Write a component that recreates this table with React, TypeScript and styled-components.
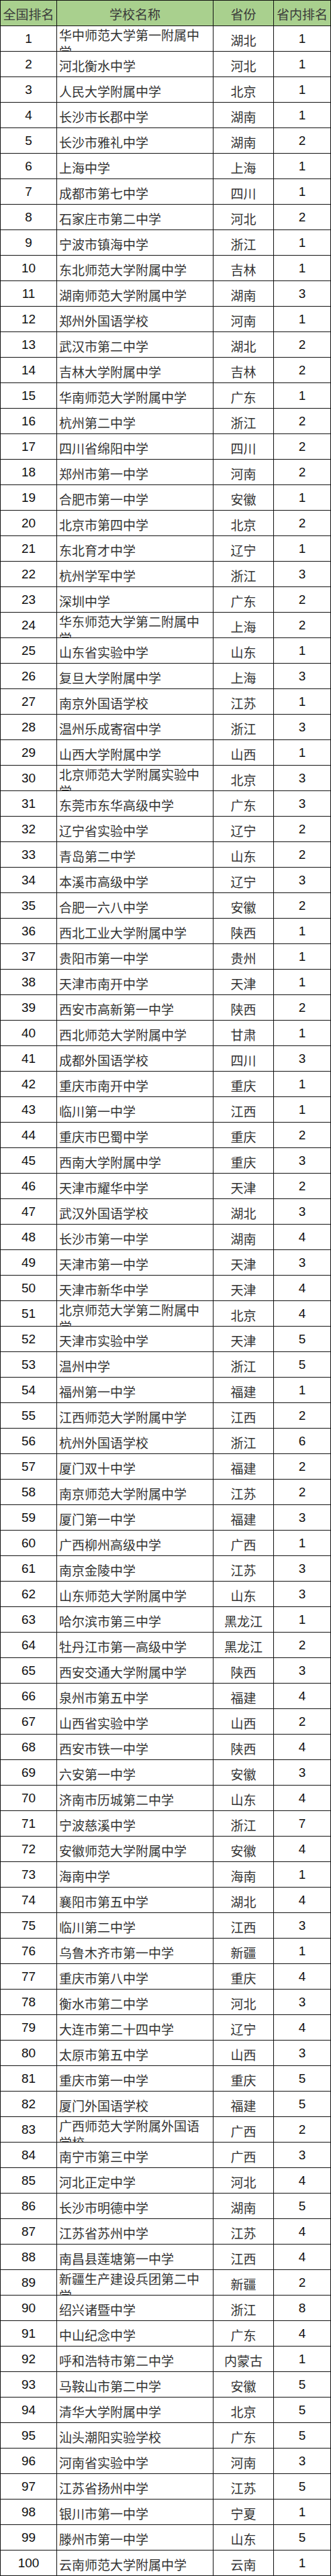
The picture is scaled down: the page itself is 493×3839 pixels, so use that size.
import React from 'react';
import styled, { createGlobalStyle } from 'styled-components';

const GlobalStyle = createGlobalStyle`
    html, body {
        margin: 0;
        padding: 0;
        background: #ffffff;
    }
`

type School = [number, string, string, number];

const schools: School[] = [
    [1, "华中师范大学第一附属中学", "湖北", 1],
    [2, "河北衡水中学", "河北", 1],
    [3, "人民大学附属中学", "北京", 1],
    [4, "长沙市长郡中学", "湖南", 1],
    [5, "长沙市雅礼中学", "湖南", 2],
    [6, "上海中学", "上海", 1],
    [7, "成都市第七中学", "四川", 1],
    [8, "石家庄市第二中学", "河北", 2],
    [9, "宁波市镇海中学", "浙江", 1],
    [10, "东北师范大学附属中学", "吉林", 1],
    [11, "湖南师范大学附属中学", "湖南", 3],
    [12, "郑州外国语学校", "河南", 1],
    [13, "武汉市第二中学", "湖北", 2],
    [14, "吉林大学附属中学", "吉林", 2],
    [15, "华南师范大学附属中学", "广东", 1],
    [16, "杭州第二中学", "浙江", 2],
    [17, "四川省绵阳中学", "四川", 2],
    [18, "郑州市第一中学", "河南", 2],
    [19, "合肥市第一中学", "安徽", 1],
    [20, "北京市第四中学", "北京", 2],
    [21, "东北育才中学", "辽宁", 1],
    [22, "杭州学军中学", "浙江", 3],
    [23, "深圳中学", "广东", 2],
    [24, "华东师范大学第二附属中学", "上海", 2],
    [25, "山东省实验中学", "山东", 1],
    [26, "复旦大学附属中学", "上海", 3],
    [27, "南京外国语学校", "江苏", 1],
    [28, "温州乐成寄宿中学", "浙江", 3],
    [29, "山西大学附属中学", "山西", 1],
    [30, "北京师范大学附属实验中学", "北京", 3],
    [31, "东莞市东华高级中学", "广东", 3],
    [32, "辽宁省实验中学", "辽宁", 2],
    [33, "青岛第二中学", "山东", 2],
    [34, "本溪市高级中学", "辽宁", 3],
    [35, "合肥一六八中学", "安徽", 2],
    [36, "西北工业大学附属中学", "陕西", 1],
    [37, "贵阳市第一中学", "贵州", 1],
    [38, "天津市南开中学", "天津", 1],
    [39, "西安市高新第一中学", "陕西", 2],
    [40, "西北师范大学附属中学", "甘肃", 1],
    [41, "成都外国语学校", "四川", 3],
    [42, "重庆市南开中学", "重庆", 1],
    [43, "临川第一中学", "江西", 1],
    [44, "重庆市巴蜀中学", "重庆", 2],
    [45, "西南大学附属中学", "重庆", 3],
    [46, "天津市耀华中学", "天津", 2],
    [47, "武汉外国语学校", "湖北", 3],
    [48, "长沙市第一中学", "湖南", 4],
    [49, "天津市第一中学", "天津", 3],
    [50, "天津市新华中学", "天津", 4],
    [51, "北京师范大学第二附属中学", "北京", 4],
    [52, "天津市实验中学", "天津", 5],
    [53, "温州中学", "浙江", 5],
    [54, "福州第一中学", "福建", 1],
    [55, "江西师范大学附属中学", "江西", 2],
    [56, "杭州外国语学校", "浙江", 6],
    [57, "厦门双十中学", "福建", 2],
    [58, "南京师范大学附属中学", "江苏", 2],
    [59, "厦门第一中学", "福建", 3],
    [60, "广西柳州高级中学", "广西", 1],
    [61, "南京金陵中学", "江苏", 3],
    [62, "山东师范大学附属中学", "山东", 3],
    [63, "哈尔滨市第三中学", "黑龙江", 1],
    [64, "牡丹江市第一高级中学", "黑龙江", 2],
    [65, "西安交通大学附属中学", "陕西", 3],
    [66, "泉州市第五中学", "福建", 4],
    [67, "山西省实验中学", "山西", 2],
    [68, "西安市铁一中学", "陕西", 4],
    [69, "六安第一中学", "安徽", 3],
    [70, "济南市历城第二中学", "山东", 4],
    [71, "宁波慈溪中学", "浙江", 7],
    [72, "安徽师范大学附属中学", "安徽", 4],
    [73, "海南中学", "海南", 1],
    [74, "襄阳市第五中学", "湖北", 4],
    [75, "临川第二中学", "江西", 3],
    [76, "乌鲁木齐市第一中学", "新疆", 1],
    [77, "重庆市第八中学", "重庆", 4],
    [78, "衡水市第二中学", "河北", 3],
    [79, "大连市第二十四中学", "辽宁", 4],
    [80, "太原市第五中学", "山西", 3],
    [81, "重庆市第一中学", "重庆", 5],
    [82, "厦门外国语学校", "福建", 5],
    [83, "广西师范大学附属外国语学校", "广西", 2],
    [84, "南宁市第三中学", "广西", 3],
    [85, "河北正定中学", "河北", 4],
    [86, "长沙市明德中学", "湖南", 5],
    [87, "江苏省苏州中学", "江苏", 4],
    [88, "南昌县莲塘第一中学", "江西", 4],
    [89, "新疆生产建设兵团第二中学", "新疆", 2],
    [90, "绍兴诸暨中学", "浙江", 8],
    [91, "中山纪念中学", "广东", 4],
    [92, "呼和浩特市第二中学", "内蒙古", 1],
    [93, "马鞍山市第二中学", "安徽", 5],
    [94, "清华大学附属中学", "北京", 5],
    [95, "汕头潮阳实验学校", "广东", 5],
    [96, "河南省实验中学", "河南", 3],
    [97, "江苏省扬州中学", "江苏", 5],
    [98, "银川市第一中学", "宁夏", 1],
    [99, "滕州市第一中学", "山东", 5],
    [100, "云南师范大学附属中学", "云南", 1],
];

const RankingTable: React.FC = () => {
    return (
    <Sheet>
        <HeaderRow>
            <HeadCell>全国排名</HeadCell>
            <HeadCell>学校名称</HeadCell>
            <HeadCell>省份</HeadCell>
            <HeadCell>省内排名</HeadCell>
        </HeaderRow>
        {schools.map(([rank, name, province, local]) => (
            <Row key={rank}>
                <NumberCell>{rank}</NumberCell>
                <NameCell $wrap={name.length > 11}>
                    <NameText>{name}</NameText>
                </NameCell>
                <ProvinceCell>{province}</ProvinceCell>
                <NumberCell>{local}</NumberCell>
            </Row>
        ))}
    </Sheet>
    )
}

const App: React.FC = () => (
    <>
        <GlobalStyle />
        <RankingTable />
    </>
)

const Sheet = styled.div`
    width: 493px;
    border-bottom: 1px solid #111;
    background: #fff;
`

const Row = styled.div`
    display: grid;
    grid-template-columns: 84px 233px 90px 85px;
    height: 37px;
    border-top: 1px solid #111;
    border-right: 1px solid #111;
`

const HeaderRow = styled(Row)`
    background: #a9d08e;
`

const Cell = styled.div`
    border-left: 1px solid #111;
    height: 37px;
    overflow: hidden;
    box-sizing: border-box;
    display: flex;
    align-items: center;
    justify-content: center;
`

const HeadCell = styled(Cell)`
    font-family: "Noto Sans CJK SC", sans-serif;
    font-weight: 400;
    font-size: 19px;
    color: #3a3a3a;
    padding-top: 2px;
`

const NumberCell = styled(Cell)`
    font-family: "Liberation Sans", Arial, sans-serif;
    font-size: 19px;
    color: #111;
    padding-top: 1px;
`

const ProvinceCell = styled(Cell)`
    font-family: "Noto Sans CJK SC", sans-serif;
    font-weight: 400;
    font-size: 19px;
    color: #333;
    padding-top: 3px;
`

const NameCell = styled(Cell)<{ $wrap?: boolean }>`
    justify-content: flex-start;
    align-items: ${p => p.$wrap ? 'flex-start' : 'center'};
    padding: ${p => p.$wrap ? '0 3px 0 3px' : '3px 3px 0 3px'};
`

const NameText = styled.span`
    font-family: "Noto Sans CJK SC", sans-serif;
    font-weight: 400;
    font-size: 19px;
    line-height: 25px;
    color: #333;
    word-break: break-all;
`

export default App;
